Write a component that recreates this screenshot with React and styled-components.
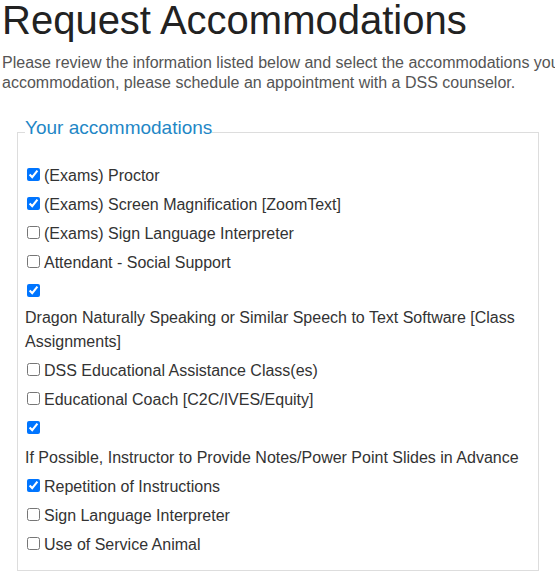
import React from "react";
import styled, { createGlobalStyle } from "styled-components";

const Global = createGlobalStyle`
  html, body {
    margin: 0;
    padding: 0;
    overflow: hidden;
    background: #ffffff;
    font-family: "Liberation Sans", Arial, sans-serif;
  }
`;

const Page = styled.main`
  display: flex;
  flex-direction: column;
  align-items: flex-start;
  padding-left: 2px;
`;

const Title = styled.h1`
  margin: 0;
  font-size: 40px;
  line-height: 40px;
  font-weight: 400;
  color: #222222;
`;

const Lead = styled.p`
  margin: 13px 0 24px;
  font-size: 16px;
  line-height: 20px;
  color: #555555;
  white-space: nowrap;
`;

const Group = styled.fieldset`
  box-sizing: border-box;
  width: 522px;
  margin: 0 0 0 15px;
  padding: 13px 8px 11px 7px;
  border: 1px solid #dddddd;
  min-width: 0;
`;

const Legend = styled.legend`
  padding: 0 0 9px;
  font-size: 19px;
  line-height: 22px;
  color: #1f87c6;
`;

const Item = styled.label`
  display: block;
  font-size: 16px;
  line-height: 29px;
  color: #333333;
`;

const Box = styled.input`
  width: 13px;
  height: 13px;
  margin: 0 4px 0 2px;
  vertical-align: baseline;
`;

const Text = styled.span`
  display: inline-block;
  line-height: 24px;
`;

const items = [
  ["(Exams) Proctor", true],
  ["(Exams) Screen Magnification [ZoomText]", true],
  ["(Exams) Sign Language Interpreter", false],
  ["Attendant - Social Support", false],
  ["Dragon Naturally Speaking or Similar Speech to Text Software [Class Assignments]", true],
  ["DSS Educational Assistance Class(es)", false],
  ["Educational Coach [C2C/IVES/Equity]", false],
  ["If Possible, Instructor to Provide Notes/Power Point Slides in Advance", true],
  ["Repetition of Instructions", true],
  ["Sign Language Interpreter", false],
  ["Use of Service Animal", false],
];

export default function App() {
  return (
    <Page>
      <Global />
      <Title>Request Accommodations</Title>
      <Lead>
        Please review the information listed below and select the accommodations you would like to request. If you need a new
        <br />
        accommodation, please schedule an appointment with a DSS counselor.
      </Lead>
      <Group>
        <Legend>Your accommodations</Legend>
        {items.map(([label, checked]) => (
          <Item key={label}>
            <Box type="checkbox" defaultChecked={checked} />
            <Text>{label}</Text>
          </Item>
        ))}
      </Group>
    </Page>
  );
}
